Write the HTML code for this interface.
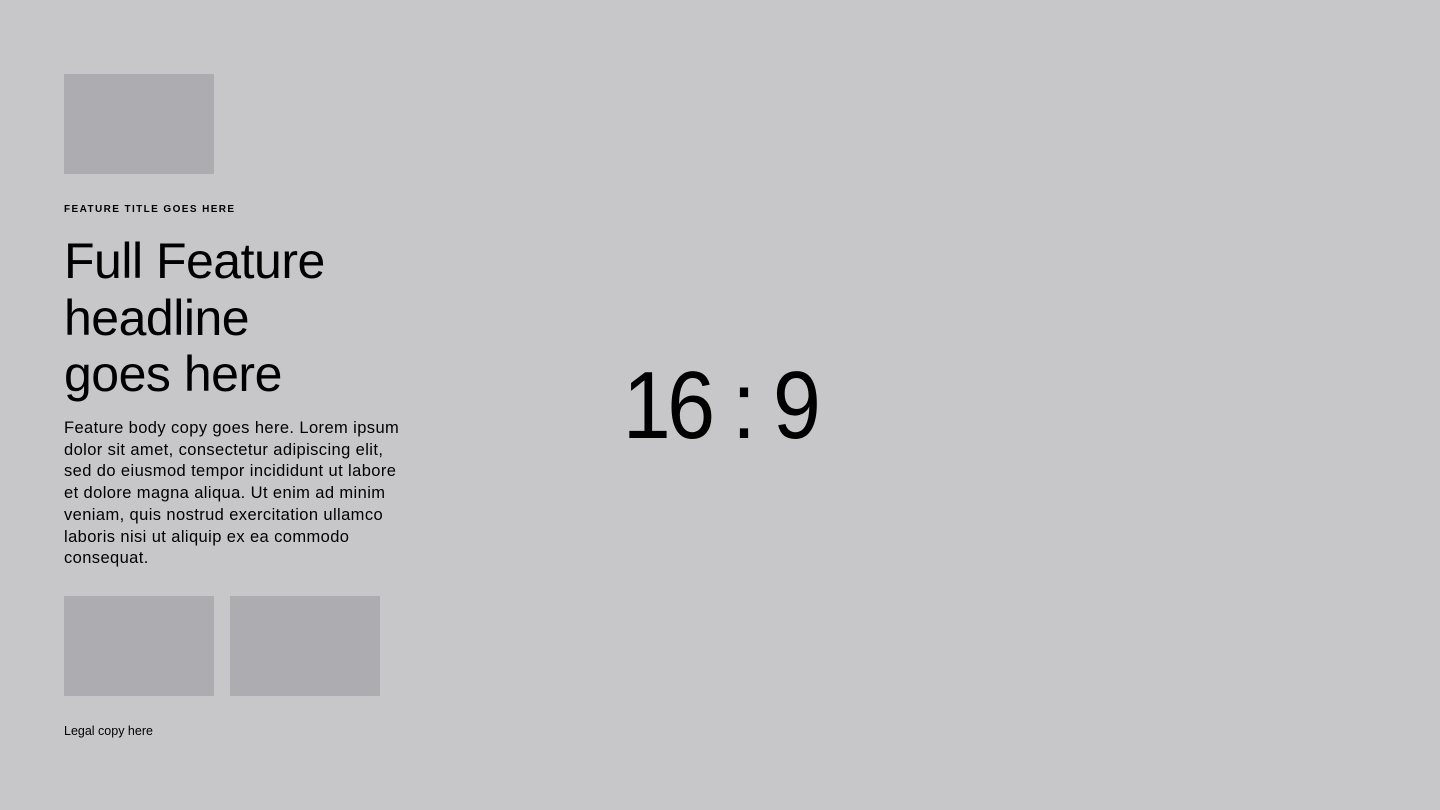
<!DOCTYPE html>
<html><head><style>
html,body{margin:0;padding:0;}
body{width:1440px;height:810px;background:#c7c7c9;position:relative;overflow:hidden;font-family:"Liberation Sans",sans-serif;color:#000;}
.box{position:absolute;background:#adacb0;width:150px;height:100px;}
.t{position:absolute;left:64px;white-space:nowrap;}
</style></head><body>
<div class="box" style="left:64px;top:74px"></div>
<div class="t" style="top:204px;font-size:10px;font-weight:bold;letter-spacing:1.4px;">FEATURE TITLE GOES HERE</div>
<div class="t" style="top:233px;font-size:50px;line-height:56.5px;letter-spacing:-0.5px;">Full Feature<br>headline<br>goes here</div>
<div class="t" style="top:418px;font-size:16.5px;line-height:21.7px;letter-spacing:0.4px;">Feature body copy goes here. Lorem ipsum<br>dolor sit amet, consectetur adipiscing elit,<br>sed do eiusmod tempor incididunt ut labore<br>et dolore magna aliqua. Ut enim ad minim<br>veniam, quis nostrud exercitation ullamco<br>laboris nisi ut aliquip ex ea commodo<br>consequat.</div>
<div class="box" style="left:64px;top:596px"></div>
<div class="box" style="left:230px;top:596px"></div>
<div class="t" style="top:724px;font-size:12.5px;">Legal copy here</div>
<div style="position:absolute;left:520px;width:400px;top:358px;text-align:center;font-size:96px;line-height:96px;letter-spacing:-4px;transform:scaleX(0.9);">16 : 9</div>
</body></html>
